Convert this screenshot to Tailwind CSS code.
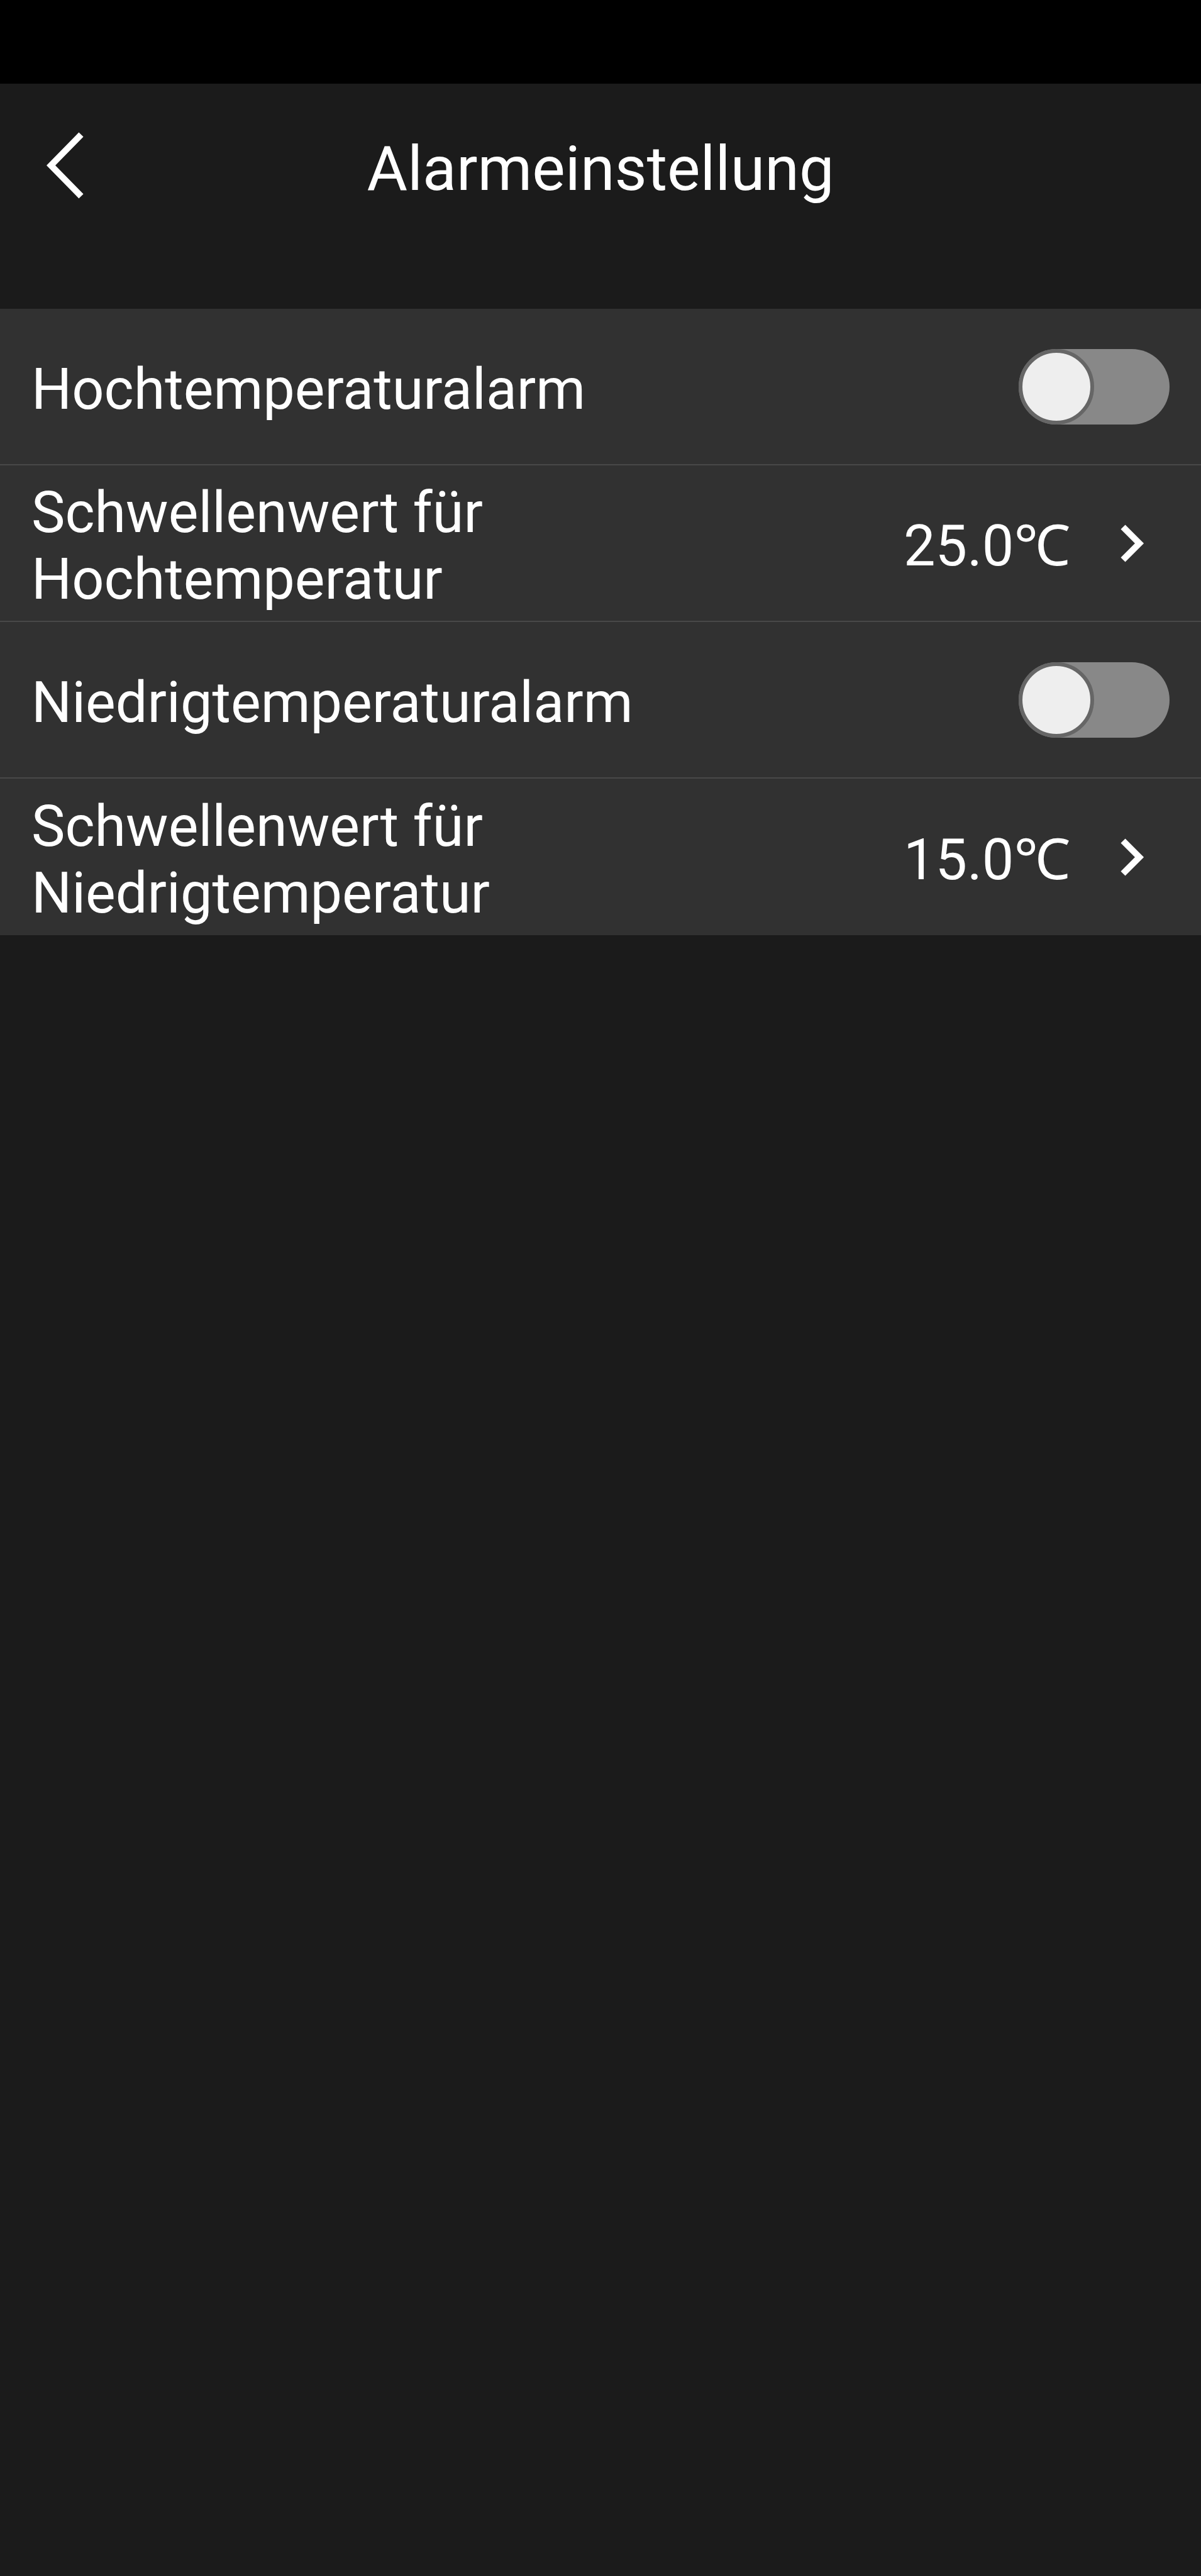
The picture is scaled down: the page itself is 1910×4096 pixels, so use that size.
<!DOCTYPE html>
<html lang="de">
<head>
    <meta charset="UTF-8">
    <meta name="viewport" content="width=device-width, initial-scale=1">
    <script src="https://cdn.jsdelivr.net/npm/@tailwindcss/browser@4"></script>
    <title>Alarmeinstellung</title>
</head>

<body class="min-h-screen bg-[#1b1b1b] font-['Roboto','Noto_Sans',sans-serif] text-white">
    <!-- Status bar -->
    <div class="h-[133px] bg-black"></div>

    <!-- HEADER SECTION -->
    <header class="grid h-[260px] grid-cols-[1fr_auto_1fr] items-center mb-[98px]">
        <button type="button" aria-label="Zurück" class="ml-[50px] w-[110px] cursor-pointer">
            <svg viewBox="0 0 110 110" class="block w-full" fill="none" stroke="currentColor" stroke-width="10">
                <path d="M79 6L31 55L79 104"/>
            </svg>
        </button>
        <h1 class="pt-[10px] text-[99px] leading-[118px]">Alarmeinstellung</h1>
    </header>

    <!-- SETTINGS SECTION -->
    <main class="divide-y-2 divide-[#484848] bg-[#313131] text-[90px] leading-[106px]">
        <!-- High temperature -->
        <div class="flex h-[249px] items-center justify-between px-[50px]">
            <label for="high-alarm" class="pt-[10px]">Hochtemperaturalarm</label>
            <input id="high-alarm" type="checkbox" role="switch" class="h-[120px] w-[240px] shrink-0 appearance-none rounded-full bg-[#888888] before:block before:size-[120px] before:rounded-full before:border-6 before:border-[#666666] before:bg-[#eeeeee] before:content-[''] checked:before:ml-[120px]">
        </div>
        <button type="button" class="flex h-[249px] w-full cursor-pointer items-center pl-[50px] pr-20 text-left">
            <span class="max-w-[60%] pt-[10px]">Schwellenwert für Hochtemperatur</span>
            <span class="ml-auto pt-[10px]">25.0℃</span>
            <svg viewBox="0 0 60 60" class="ml-[68px] size-[60px] shrink-0" fill="none" stroke="currentColor" stroke-width="10">
                <path d="M16 4L42 30L16 56"/>
            </svg>
        </button>

        <!-- Low temperature -->
        <div class="flex h-[249px] items-center justify-between px-[50px]">
            <label for="low-alarm" class="pt-[10px]">Niedrigtemperaturalarm</label>
            <input id="low-alarm" type="checkbox" role="switch" class="h-[120px] w-[240px] shrink-0 appearance-none rounded-full bg-[#888888] before:block before:size-[120px] before:rounded-full before:border-6 before:border-[#666666] before:bg-[#eeeeee] before:content-[''] checked:before:ml-[120px]">
        </div>
        <button type="button" class="flex h-[249px] w-full cursor-pointer items-center pl-[50px] pr-20 text-left">
            <span class="max-w-[60%] pt-[10px]">Schwellenwert für Niedrigtemperatur</span>
            <span class="ml-auto pt-[10px]">15.0℃</span>
            <svg viewBox="0 0 60 60" class="ml-[68px] size-[60px] shrink-0" fill="none" stroke="currentColor" stroke-width="10">
                <path d="M16 4L42 30L16 56"/>
            </svg>
        </button>
    </main>
</body>
</html>
